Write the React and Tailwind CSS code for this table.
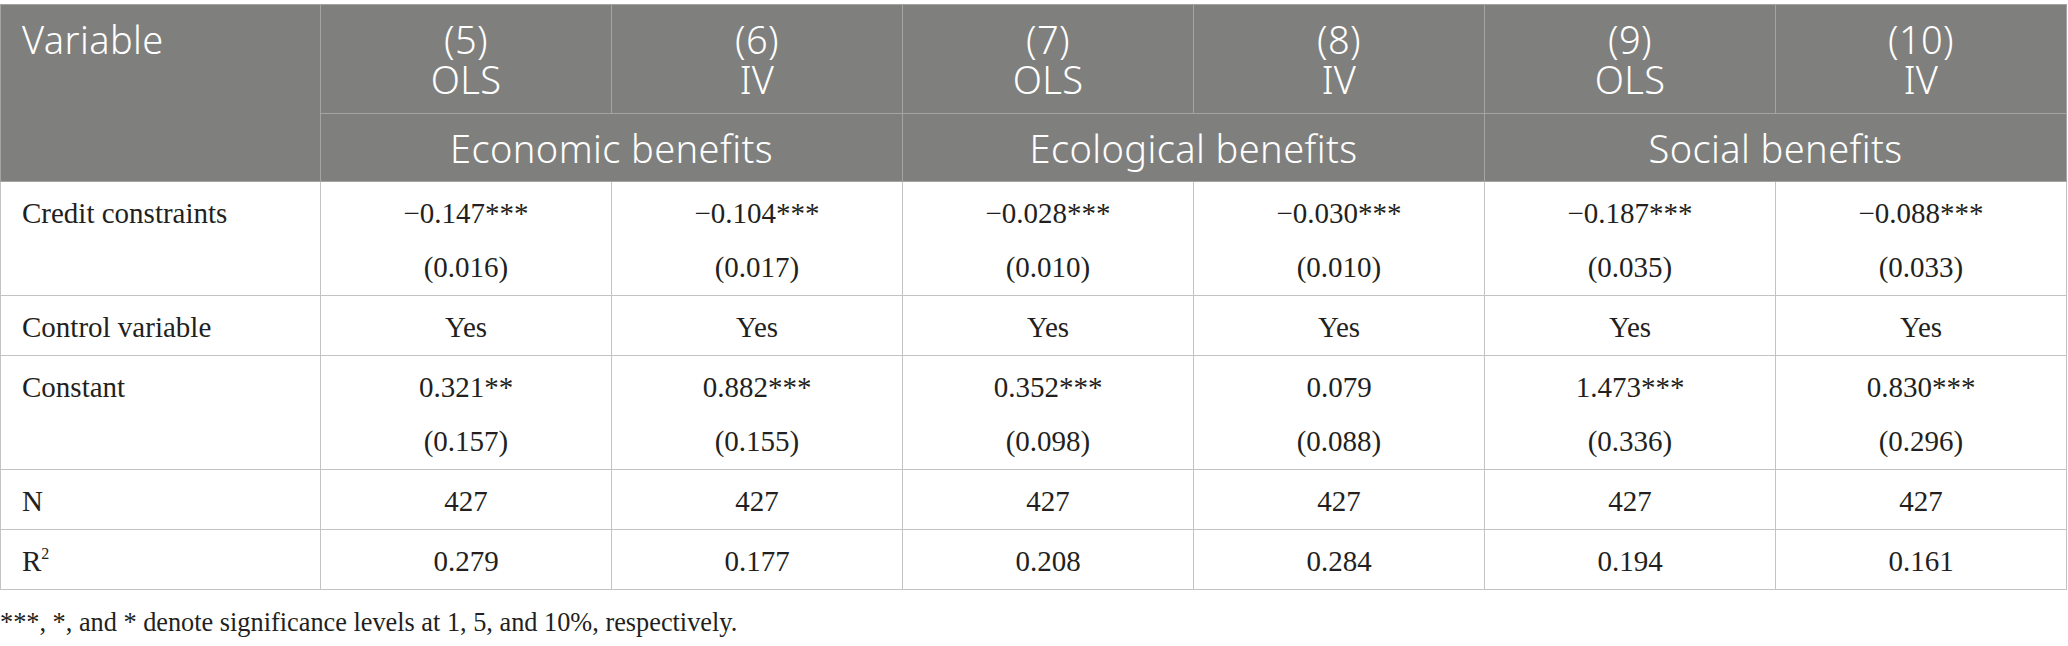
import React from "react";

const heads = [
  ["(5)", "OLS"],
  ["(6)", "IV"],
  ["(7)", "OLS"],
  ["(8)", "IV"],
  ["(9)", "OLS"],
  ["(10)", "IV"],
];

const groups = ["Economic benefits", "Ecological benefits", "Social benefits"];

const rows = [
  {
    label: "Credit constraints",
    cells: [
      ["−0.147***", "(0.016)"],
      ["−0.104***", "(0.017)"],
      ["−0.028***", "(0.010)"],
      ["−0.030***", "(0.010)"],
      ["−0.187***", "(0.035)"],
      ["−0.088***", "(0.033)"],
    ],
  },
  { label: "Control variable", cells: ["Yes", "Yes", "Yes", "Yes", "Yes", "Yes"].map((v) => [v]) },
  {
    label: "Constant",
    cells: [
      ["0.321**", "(0.157)"],
      ["0.882***", "(0.155)"],
      ["0.352***", "(0.098)"],
      ["0.079", "(0.088)"],
      ["1.473***", "(0.336)"],
      ["0.830***", "(0.296)"],
    ],
  },
  { label: "N", cells: ["427", "427", "427", "427", "427", "427"].map((v) => [v]) },
  {
    label: (
      <>
        R<sup className="text-[16px] relative -top-[12px]">2</sup>
      </>
    ),
    cells: ["0.279", "0.177", "0.208", "0.284", "0.194", "0.161"].map((v) => [v]),
  },
];

export default function App() {
  return (
    <div className="bg-white w-[2068px] h-[646px] overflow-hidden pt-[4px]">
      <table className="table-fixed border-collapse w-[2067px] border border-[#bdbdbd]">
        <colgroup>
          <col className="w-[320px]" />
          <col />
          <col />
          <col />
          <col />
          <col />
          <col />
        </colgroup>
        <thead className="bg-[#7f807e] text-white font-['Noto_Sans',sans-serif] font-light text-[38px] leading-[40px] tracking-[0.4px]">
          <tr>
            <th
              rowSpan={2}
              className="align-top text-left font-light pl-[21px] pt-[14px] border border-[#a4a5a3]"
            >
              Variable
            </th>
            {heads.map((h, i) => (
              <th key={i} className="font-light pt-[14px] pb-[14px] border border-[#a4a5a3]">
                <div>{h[0]}</div>
                <div>{h[1]}</div>
              </th>
            ))}
          </tr>
          <tr>
            {groups.map((g) => (
              <th key={g} colSpan={2} className="font-light pt-[14px] pb-[13px] border border-[#a4a5a3]">
                {g}
              </th>
            ))}
          </tr>
        </thead>
        <tbody className="text-[#231f20] font-['Liberation_Serif',serif] text-[29px] leading-[52px]">
          {rows.map((r, ri) => (
            <tr key={ri}>
              <td className="align-top text-left pl-[21px] pt-[5px] pb-[2px] border border-[#c3c3c3]">
                {r.label}
              </td>
              {r.cells.map((c, ci) => (
                <td key={ci} className="align-top text-center pt-[5px] pb-[2px] border border-[#c3c3c3]">
                  {c.map((line, li) => (
                    <div key={li} className={li > 0 ? "mt-[2px]" : ""}>
                      {line}
                    </div>
                  ))}
                </td>
              ))}
            </tr>
          ))}
        </tbody>
      </table>
      <p className="mt-[17px] text-[#231f20] font-['Liberation_Serif',serif] text-[26.3px] leading-[32px]">
        ***, *, and * denote significance levels at 1, 5, and 10%, respectively.
      </p>
    </div>
  );
}
